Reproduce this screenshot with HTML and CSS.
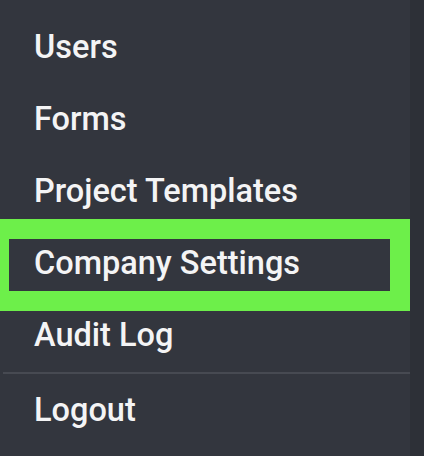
FILE: index.html
```html
<!DOCTYPE html>
<html>
<head>
<meta charset="utf-8">
<link rel="stylesheet" href="styles.css">
</head>
<body>
<div class="layout">
  <nav class="menu">
    <a class="item">Users</a>
    <a class="item">Forms</a>
    <a class="item">Project Templates</a>
    <a class="item highlighted">Company Settings</a>
    <a class="item">Audit Log</a>
    <div class="divider"></div>
    <a class="item">Logout</a>
  </nav>
  <div class="strip"></div>
</div>
</body>
</html>
```
FILE: styles.css
```css
html, body {
  margin: 0;
  padding: 0;
  background: #33363e;
}
.layout {
  display: flex;
  width: 424px;
  height: 456px;
  overflow: hidden;
}
.menu {
  width: 410px;
  flex: none;
  background: #33363e;
  padding-top: 11px;
  display: flex;
  flex-direction: column;
}
.strip {
  flex: 1;
  background: #2d3037;
}
.item {
  display: block;
  position: relative;
  height: 72px;
  line-height: 72px;
  padding-left: 34px;
  font-family: Roboto, "Liberation Sans", sans-serif;
  font-weight: 500;
  font-size: 32.5px;
  color: #f4f4f5;
  white-space: nowrap;
}
.highlighted::after {
  content: "";
  position: absolute;
  left: 0;
  top: -8px;
  width: 410px;
  height: 92px;
  box-sizing: border-box;
  border-style: solid;
  border-color: #6def4a;
  border-width: 20px 20px 20px 9px;
}
.divider {
  height: 2px;
  margin: 1px 0 0 3px;
  background: #474a52;
}
```
